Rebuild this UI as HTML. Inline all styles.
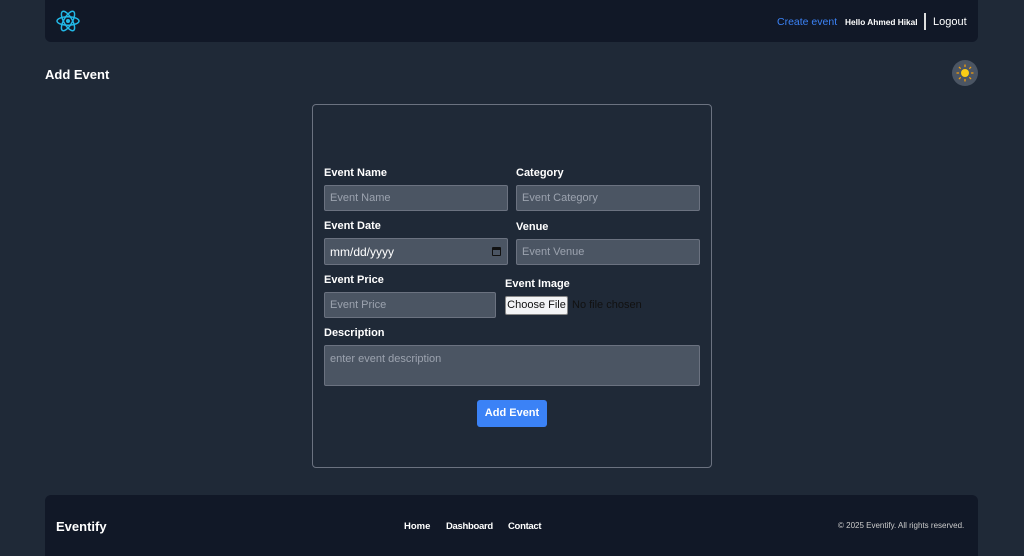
<!DOCTYPE html>
<html><head><style>
*{box-sizing:border-box;margin:0;padding:0}
body{width:1024px;height:556px;background:#1f2937;font-family:"Liberation Sans",sans-serif;color:#fff;position:relative;overflow:hidden}
.a{position:absolute}
.hdr{left:45px;top:0;width:933px;height:42px;background:#111827;border-radius:0 0 6px 6px}
.ftr{left:45px;top:495px;width:933px;height:61px;background:#111827;border-radius:6px 6px 0 0}
.card{left:312px;top:104px;width:400px;height:364px;border:1px solid #6b7280;border-radius:4px;background:#1f2937}
.lbl{font-size:11px;font-weight:bold;color:#fff}
.in{background:#4b5563;border:1px solid #6b7280;border-radius:2px;font-size:11px;color:#9ca3af;padding-left:5px;display:flex;align-items:center}
</style></head><body>
<div class="a hdr"></div>
<svg class="a" style="left:56px;top:9px" width="24" height="24" viewBox="0 0 24 24" fill="none" stroke="#22b8e6" stroke-width="1.5"><ellipse cx="12" cy="12" rx="11" ry="4.2"/><ellipse cx="12" cy="12" rx="11" ry="4.2" transform="rotate(60 12 12)"/><ellipse cx="12" cy="12" rx="11" ry="4.2" transform="rotate(120 12 12)"/><circle cx="12" cy="12" r="2" fill="#22b8e6" stroke="none"/></svg>
<div class="a" style="left:777px;top:16px;font-size:10.5px;color:#3b82f6">Create event</div>
<div class="a" style="left:845px;top:17px;font-size:8.3px;font-weight:bold">Hello Ahmed Hikal</div>
<div class="a" style="left:924px;top:13px;width:2px;height:17px;background:#ddd"></div>
<div class="a" style="left:933px;top:16px;font-size:11px">Logout</div>
<div class="a" style="left:45px;top:67px;font-size:13px;font-weight:bold">Add Event</div>
<div class="a" style="left:952px;top:60px;width:26px;height:26px;border-radius:50%;background:#4b5563"></div>
<svg class="a" style="left:955px;top:63px" width="20" height="20" viewBox="0 0 20 20" stroke="#f59e0b" stroke-width="1.3" stroke-linecap="round"><circle cx="10" cy="10" r="4" fill="#facc15" stroke="none"/><path d="M10 2v1.5M10 16.5V18M2 10h1.5M16.5 10H18M4.3 4.3l1 1M14.7 14.7l1 1M4.3 15.7l1-1M14.7 5.3l1-1"/></svg>
<div class="a card"></div>
<div class="a lbl" style="left:324px;top:167px">Event Name</div>
<div class="a lbl" style="left:516px;top:167px">Category</div>
<div class="a in" style="left:324px;top:185px;width:184px;height:26px">Event Name</div>
<div class="a in" style="left:516px;top:185px;width:184px;height:26px">Event Category</div>
<div class="a lbl" style="left:324px;top:220px">Event Date</div>
<div class="a lbl" style="left:516px;top:221px">Venue</div>
<div class="a in" style="left:324px;top:238px;width:184px;height:27px;color:#fff;font-size:12px">mm/dd/yyyy<span style="position:absolute;right:6px;top:8px;width:9px;height:9px;border:1.5px solid #111;border-top-width:3px;border-radius:1px"></span></div>
<div class="a in" style="left:516px;top:239px;width:184px;height:26px">Event Venue</div>
<div class="a lbl" style="left:324px;top:274px">Event Price</div>
<div class="a lbl" style="left:505px;top:278px">Event Image</div>
<div class="a in" style="left:324px;top:292px;width:172px;height:26px">Event Price</div>
<div class="a" style="left:505px;top:296px;width:63px;height:19px;background:#f3f4f6;border:1px solid #888;border-radius:2px;font-size:11px;color:#111;text-align:center;line-height:17px">Choose File</div>
<div class="a" style="left:572px;top:299px;font-size:11px;color:#111">No file chosen</div>
<div class="a lbl" style="left:324px;top:327px">Description</div>
<div class="a in" style="left:324px;top:345px;width:376px;height:41px;align-items:flex-start;padding-top:7px">enter event description</div>
<div class="a" style="left:477px;top:400px;width:70px;height:27px;background:#3b82f6;border-radius:3px;font-size:11px;font-weight:bold;text-align:center;line-height:27px">Add Event</div>
<div class="a ftr"></div>
<div class="a" style="left:56px;top:519px;font-size:13px;font-weight:bold">Eventify</div>
<div class="a" style="left:404px;top:521px;font-size:9.5px;font-weight:bold">Home</div>
<div class="a" style="left:446px;top:521px;font-size:9.5px;font-weight:bold;letter-spacing:-0.3px">Dashboard</div>
<div class="a" style="left:508px;top:521px;font-size:9.5px;font-weight:bold;letter-spacing:-0.3px">Contact</div>
<div class="a" style="left:838px;top:521px;font-size:8px;color:#ccc">© 2025 Eventify. All rights reserved.</div>
</body></html>
